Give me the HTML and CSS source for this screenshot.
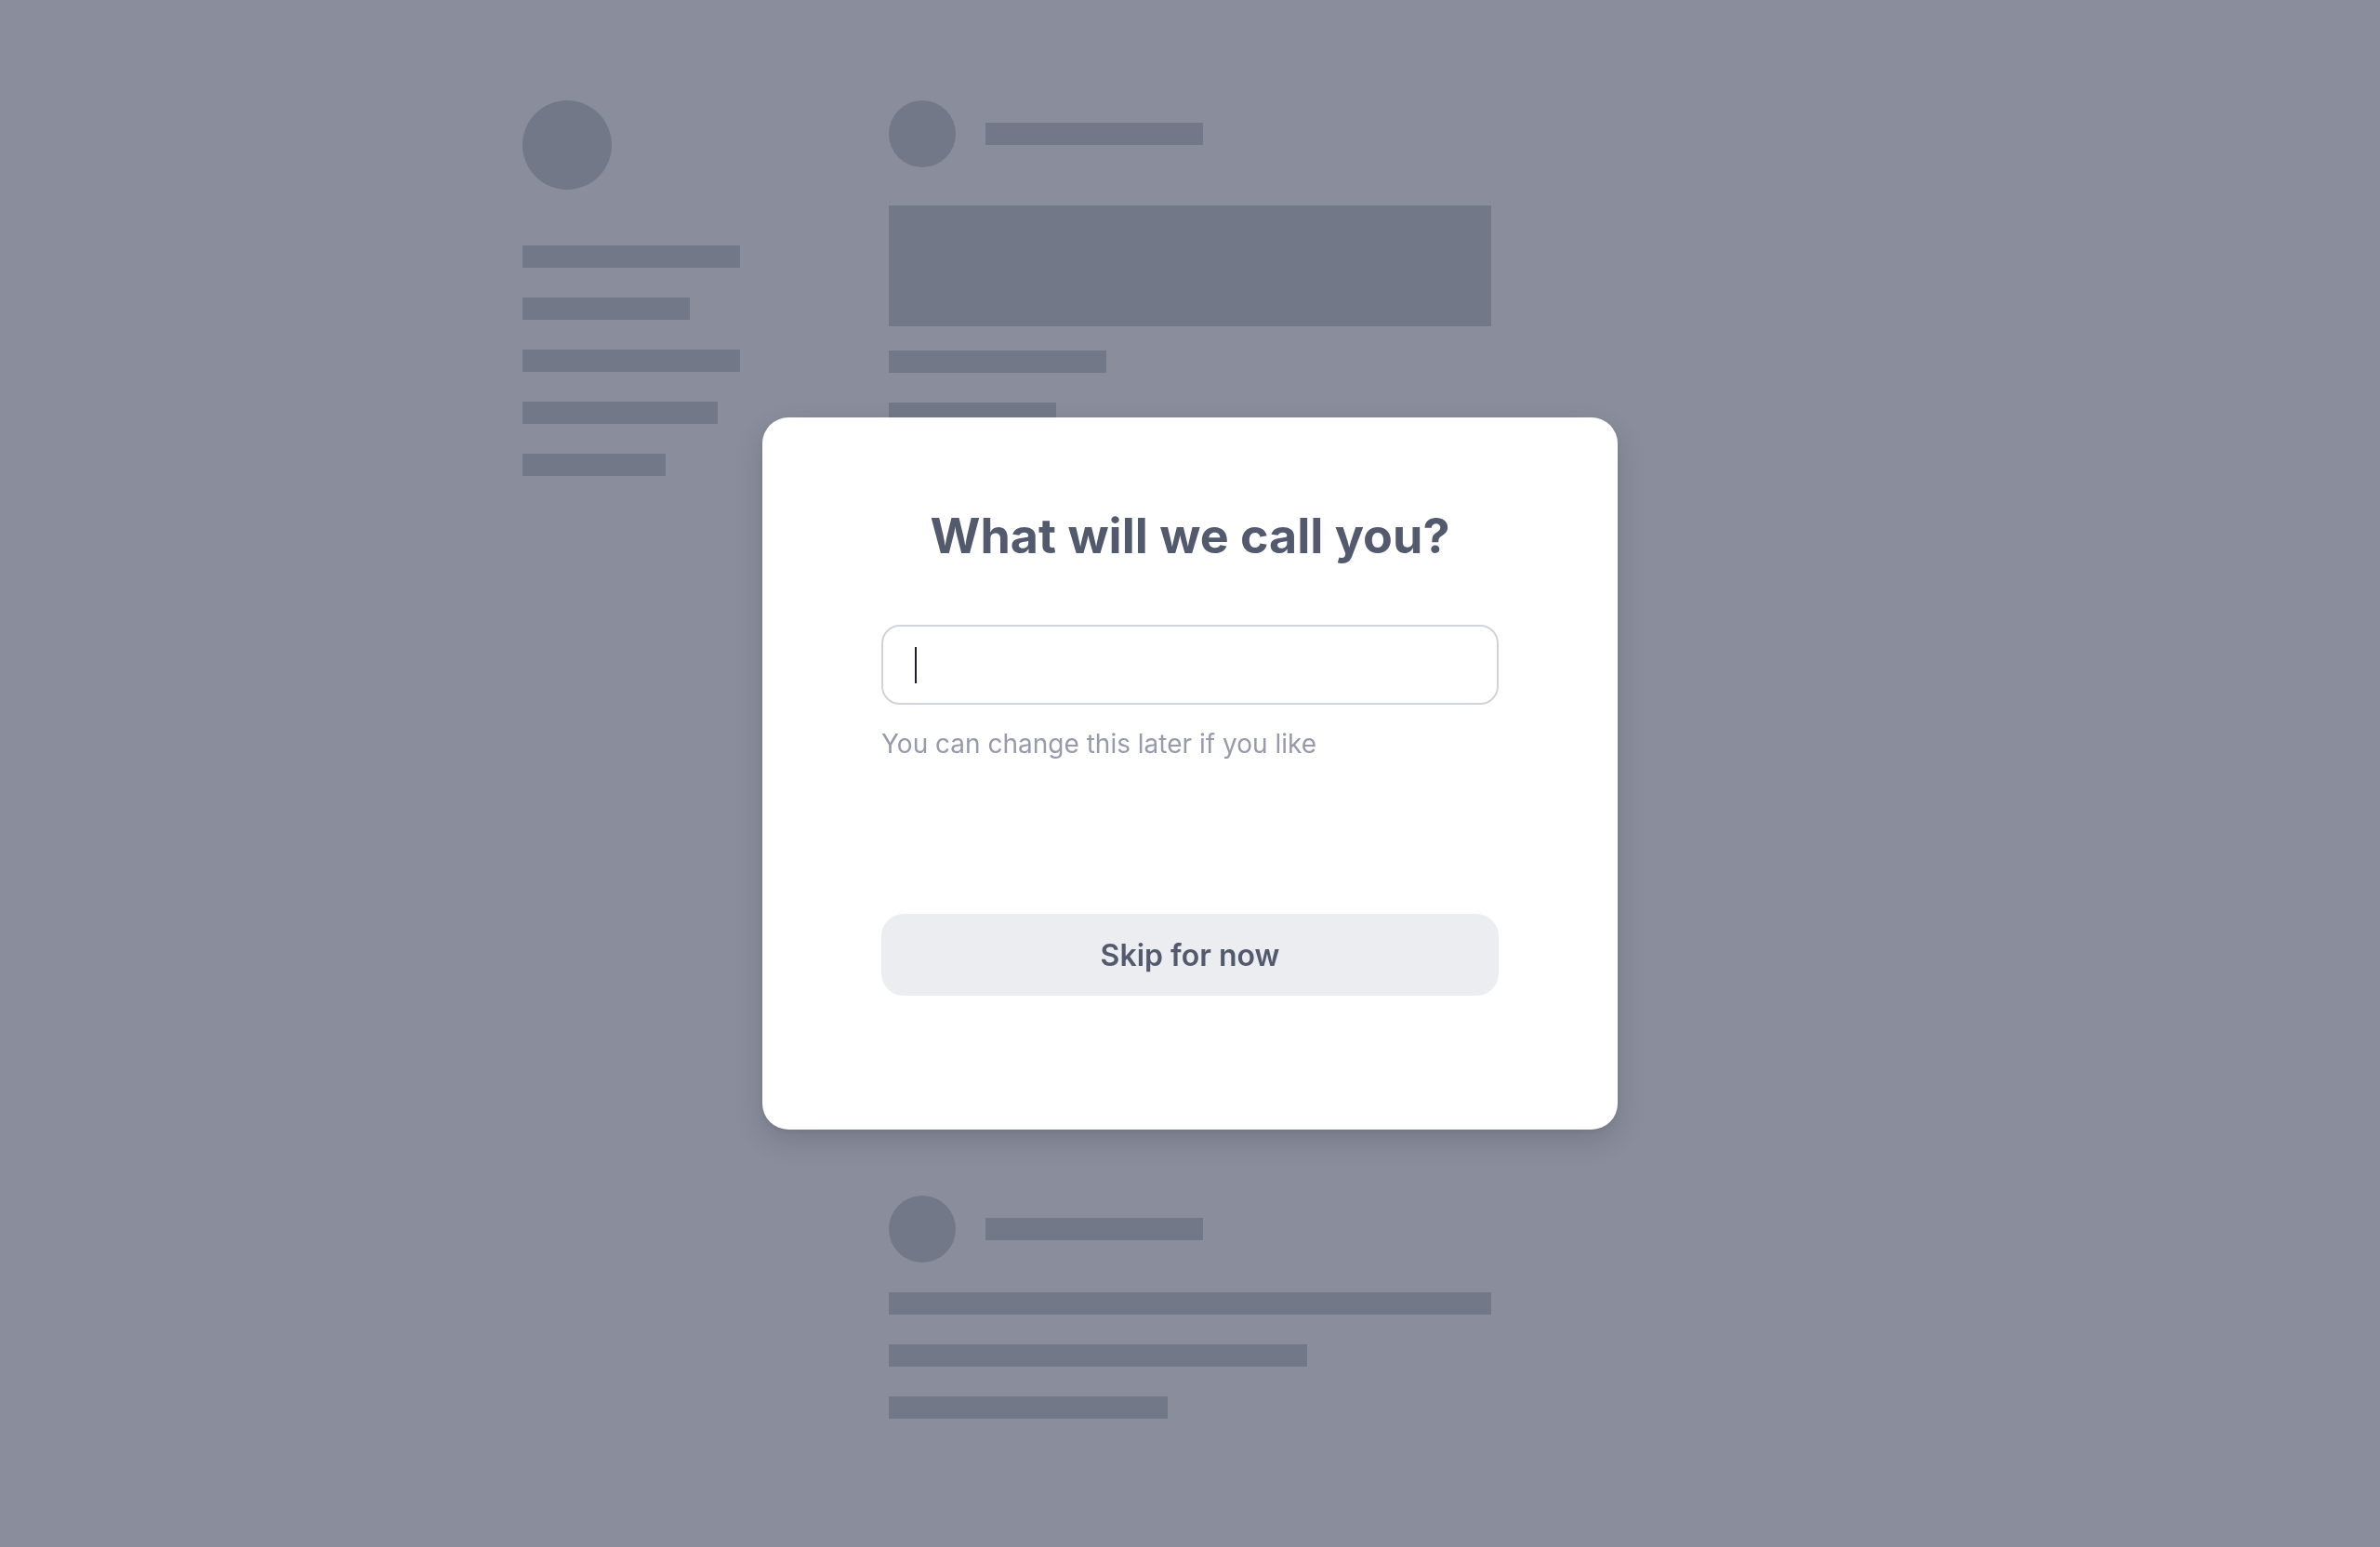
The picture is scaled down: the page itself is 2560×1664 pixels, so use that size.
FILE: index.html
```html
<!DOCTYPE html>
<html lang="en">
<head>
<meta charset="utf-8">
<title>What will we call you?</title>
<link rel="stylesheet" href="styles.css">
</head>
<body>
  <div class="page">
    <aside class="sidebar">
      <div class="sk-avatar-lg"></div>
      <div class="sk-lines">
        <div class="sk-bar w234"></div>
        <div class="sk-bar w180"></div>
        <div class="sk-bar w234"></div>
        <div class="sk-bar w210"></div>
        <div class="sk-bar w154"></div>
      </div>
    </aside>

    <main class="feed">
      <article class="post">
        <header class="post-head">
          <div class="sk-avatar"></div>
          <div class="sk-bar w234"></div>
        </header>
        <div class="sk-media"></div>
        <div class="sk-lines tight">
          <div class="sk-bar w234"></div>
          <div class="sk-bar w180"></div>
          <div class="sk-bar w400"></div>
          <div class="sk-bar w300"></div>
        </div>
        <div class="sk-media tall"></div>
      </article>

      <article class="post">
        <header class="post-head">
          <div class="sk-avatar"></div>
          <div class="sk-bar w234"></div>
        </header>
        <div class="sk-lines body">
          <div class="sk-bar full"></div>
          <div class="sk-bar w450"></div>
          <div class="sk-bar w300"></div>
        </div>
      </article>
    </main>

    <div class="right-col"></div>
  </div>

  <div class="overlay">
    <section class="modal" role="dialog" aria-labelledby="modal-title">
      <h1 id="modal-title" class="modal-title">What will we call you?</h1>
      <div class="field" role="textbox" aria-label="Name"><span class="caret"></span></div>
      <p class="hint">You can change this later if you like</p>
      <button class="skip-btn" type="button">Skip for now</button>
    </section>
  </div>
</body>
</html>
```

FILE: styles.css
```css
* {
  box-sizing: border-box;
}

html, body {
  margin: 0;
  padding: 0;
}

body {
  background: #8a8d9b;
  font-family: Inter, "Noto Sans", "Liberation Sans", sans-serif;
  min-height: 1664px;
  overflow: hidden;
}

.page {
  display: grid;
  grid-template-columns: 234px 648px 234px;
  column-gap: 160px;
  justify-content: center;
  padding-top: 108px;
}

/* skeleton pieces */
.sk-avatar-lg {
  width: 96px;
  height: 96px;
  border-radius: 50%;
  background: #737889;
}

.sk-avatar {
  width: 72px;
  height: 72px;
  border-radius: 50%;
  background: #737889;
  flex: none;
}

.sk-bar {
  height: 24px;
  background: #737889;
}

.w154 { width: 154px; }
.w180 { width: 180px; }
.w210 { width: 210px; }
.w234 { width: 234px; }
.w300 { width: 300px; }
.w400 { width: 400px; }
.w450 { width: 450px; }
.full { width: 100%; }

.sk-lines {
  display: flex;
  flex-direction: column;
  gap: 32px;
}

.sidebar .sk-lines {
  margin-top: 60px;
}

.feed {
  display: flex;
  flex-direction: column;
  gap: 96px;
}

.post-head {
  display: flex;
  align-items: center;
  gap: 32px;
}

.sk-media {
  margin-top: 41px;
  height: 130px;
  background: #737889;
}

.sk-media.tall {
  margin-top: 32px;
  height: 589px;
}

.sk-lines.tight {
  margin-top: 26px;
}

.sk-lines.body {
  margin-top: 32px;
}

/* modal */
.overlay {
  position: fixed;
  inset: 0;
  display: flex;
  align-items: center;
  justify-content: center;
}

.modal {
  width: 920px;
  background: #ffffff;
  border-radius: 28px;
  padding: 97px 128px 144px;
  display: flex;
  flex-direction: column;
  box-shadow: 0 12px 30px rgba(25, 30, 45, 0.16), 0 2px 6px rgba(25, 30, 45, 0.08);
}

.modal-title {
  margin: 0 0 64px;
  font-size: 52px;
  line-height: 62px;
  font-weight: 700;
  color: #535a6e;
  text-align: center;
}

.field {
  height: 86px;
  border: 2px solid #d0d3dc;
  border-radius: 20px;
  background: #ffffff;
  padding: 0 34px;
  display: flex;
  align-items: center;
}

.caret {
  width: 2px;
  height: 39px;
  background: #1c1f26;
}

.hint {
  margin: 22px 0 0;
  font-size: 28px;
  line-height: 40px;
  color: #969aaa;
}

.skip-btn {
  margin-top: 163px;
  height: 88px;
  border: none;
  border-radius: 24px;
  background: #ecedf0;
  color: #535a6e;
  font-family: inherit;
  font-size: 32px;
  font-weight: 600;
  cursor: pointer;
}
```
